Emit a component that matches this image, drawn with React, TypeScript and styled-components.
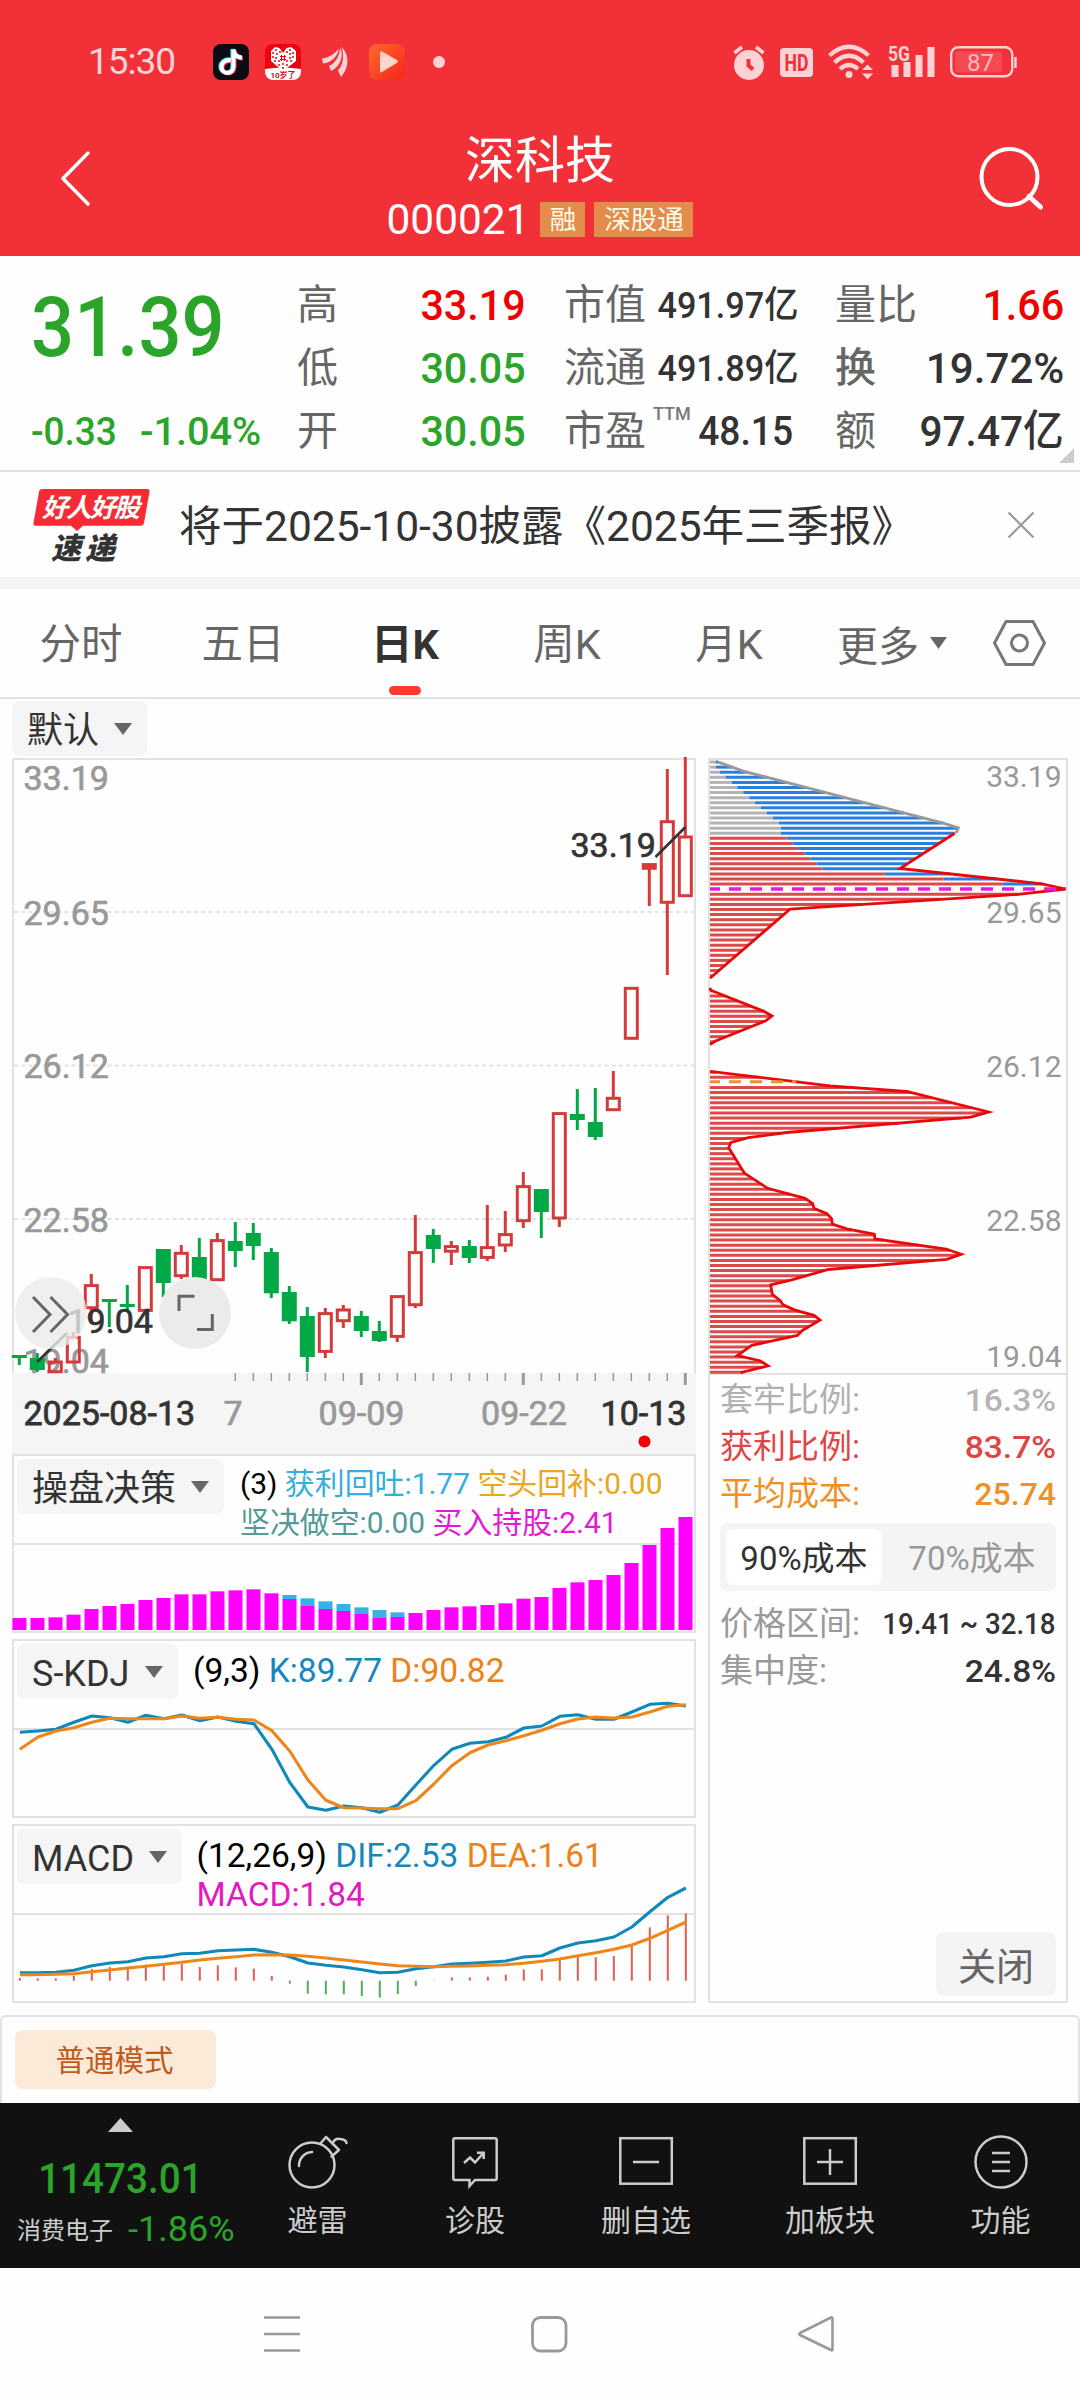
import React from "react";
import styled, { createGlobalStyle } from "styled-components";

const GlobalStyle = createGlobalStyle`
  * { box-sizing: border-box; }
  body { margin: 0; background: #fdfdfd; }
  svg { display: block; flex: none; overflow: visible; }
`;

const FONT = `Roboto, "Noto Sans CJK SC", "Noto Sans", sans-serif`;
const UP = "#f00000";
const DOWN = "#2aa52a";
const LINE = "#e2e2e2";

const Page = styled.div`
  width: 1080px;
  height: 2400px;
  display: flex;
  flex-direction: column;
  overflow: hidden;
  background: #fefefe;
  color: #333;
  font-family: ${FONT};
  white-space: nowrap;
`;

/* ---------- header ---------- */

const Header = styled.header`
  height: 256px;
  flex: none;
  background: #f23038;
  color: #fff;
`;

const StatusBar = styled.div`
  height: 124px;
  padding: 0 63px 0 88px;
  display: flex;
  justify-content: space-between;
  align-items: center;
  color: #ffd3d6;
`;

const StatusGroup = styled.div<{ $gap: number }>`
  display: flex;
  align-items: center;
  gap: ${(p) => p.$gap}px;
`;

const Clock = styled.span`
  width: 109px;
  font-size: 37px;
  line-height: 44px;
  letter-spacing: -1px;
`;

const Dot = styled.span`
  width: 12px;
  height: 12px;
  margin-left: 7px;
  border-radius: 50%;
  background: #ffd3d6;
`;

const TitleBar = styled.div`
  height: 132px;
  display: grid;
  grid-template-columns: 300px 1fr 300px;
`;

const BackSlot = styled.div`
  padding: 26px 0 0 59px;
`;

const SearchSlot = styled.div`
  padding: 21px 34.5px 0 0;
  display: flex;
  justify-content: flex-end;
  align-items: flex-start;
`;

const TitleCenter = styled.div`
  display: flex;
  flex-direction: column;
  align-items: center;
`;

const StockName = styled.div`
  margin-top: 6px;
  font-size: 50px;
  line-height: 62px;
`;

const CodeRow = styled.div`
  margin-top: 5px;
  height: 44px;
  display: flex;
  align-items: center;
  font-size: 42.4px;
`;

const Badge = styled.span<{ $w: number; $ml: number }>`
  width: ${(p) => p.$w}px;
  margin-left: ${(p) => p.$ml}px;
  margin-top: 1px;
  height: 35px;
  background: #e28d4b;
  color: #fffbe8;
  font-size: 26.5px;
  line-height: 36px;
  text-align: center;
`;

/* ---------- quote ---------- */

const Quote = styled.section`
  height: 216px;
  flex: none;
  padding: 18px 0 0 31px;
  border-bottom: 2px solid ${LINE};
  display: flex;
  position: relative;
`;

const PriceCol = styled.div`
  width: 265px;
`;

const Num = styled.span<{
  $size: number;
  $color?: string;
  $sx?: number;
  $weight?: number;
  $from?: "left" | "right" | "center";
}>`
  display: inline-block;
  font-size: ${(p) => p.$size}px;
  color: ${(p) => p.$color ?? "#333"};
  font-weight: ${(p) => p.$weight ?? 500};
  transform: scaleX(${(p) => p.$sx ?? 1});
  transform-origin: ${(p) => p.$from ?? "right"} center;
`;

const LastPrice = styled.div`
  height: 126px;
  padding-top: 5px;
  line-height: 98px;
`;

const ChangeRow = styled.div`
  height: 63px;
  line-height: 63px;
  display: flex;
`;

const ChangeCell = styled.div`
  width: 109px;
`;

const StatCol = styled.div<{ $w: number; $ml: number }>`
  width: ${(p) => p.$w}px;
  margin-left: ${(p) => p.$ml}px;
`;

const StatRow = styled.div`
  height: 63px;
  line-height: 63px;
  display: flex;
  justify-content: space-between;
`;

const StatLabel = styled.span<{ $bold?: boolean }>`
  font-size: 41px;
  color: #666;
  font-weight: ${(p) => (p.$bold ? 500 : 400)};
`;

const Sup = styled.span`
  font-size: 18px;
  line-height: 20px;
  margin: 4px auto 0 7px;
  font-weight: 500;
  color: #777;
`;

const Corner = styled.svg`
  position: absolute;
  right: 6px;
  bottom: 7px;
`;

/* ---------- news strip ---------- */

const News = styled.section`
  height: 117px;
  flex: none;
  padding: 0 45px 0 33px;
  display: flex;
  align-items: center;
  border-bottom: 12px solid #f5f5f5;
`;

const NewsLogoSlot = styled.div`
  padding-top: 3px;
`;

const NewsText = styled.div`
  margin-left: 29px;
  padding-top: 5px;
  flex: 1;
  font-size: 42.5px;
  line-height: 60px;
`;

/* ---------- tabs ---------- */

const Tabs = styled.nav`
  height: 110px;
  flex: none;
  display: flex;
  border-bottom: 2px solid ${LINE};
`;

const Tab = styled.div<{ $active?: boolean }>`
  width: 162px;
  height: 108px;
  display: flex;
  flex-direction: column;
  align-items: center;
  padding-top: 25px;
  font-size: 41.5px;
  line-height: 62px;
  color: ${(p) => (p.$active ? "#333" : "#666")};
  font-weight: ${(p) => (p.$active ? 700 : 400)};
`;

const TabMark = styled.span`
  width: 32px;
  height: 9px;
  margin-top: 10px;
  border-radius: 5px;
  background: #fb3b30;
`;

const MoreTab = styled.div`
  display: flex;
  align-items: center;
  gap: 11px;
  width: 155px;
  margin-left: 27px;
  font-size: 41px;
  color: #666;
`;

/* ---------- chart area ---------- */

const Toolbar = styled.div`
  height: 59px;
  flex: none;
  padding: 2px 12px;
`;

const Dropdown = styled.div<{ $w: number }>`
  width: ${(p) => p.$w}px;
  height: 55px;
  padding: 0 15px 0 15px;
  display: flex;
  align-items: center;
  justify-content: space-between;
  border-radius: 7px;
  background: #f5f5f5;
  font-size: 36px;
  line-height: 53px;
`;

const DropdownText = styled.span`
  padding-top: 5px;
`;

const ChartArea = styled.div`
  height: 1245px;
  flex: none;
  padding: 0 12px;
  display: flex;
  gap: 12px;
`;

const ChartColumn = styled.div`
  width: 684px;
  display: flex;
  flex-direction: column;
`;

const CandleBox = styled.div`
  position: relative;
  height: 615px;
  box-shadow: inset 2px 2px 0 ${LINE}, inset -2px 0 0 ${LINE};
`;

const FloatButton = styled.div<{ $x: number; $bg: string }>`
  position: absolute;
  left: ${(p) => p.$x}px;
  top: 519px;
  width: 72px;
  height: 72px;
  border-radius: 50%;
  background: ${(p) => p.$bg};
`;

const AxisBox = styled.div`
  height: 81px;
  background: #f5f5f5;
`;

const Panel = styled.div`
  height: 179px;
  margin-bottom: 6px;
  display: grid;
  box-shadow: inset 0 0 0 2px ${LINE};
  & > * { grid-area: 1 / 1; }
`;

const PanelHead = styled.div`
  padding: 5px;
  display: flex;
`;

const Params = styled.div<{ $size: number; $ml: number; $top: number }>`
  margin-left: ${(p) => p.$ml}px;
  margin-top: ${(p) => p.$top}px;
  font-size: ${(p) => p.$size}px;
  line-height: 39px;
  color: #000;
`;

const Ink = styled.span<{ $c: string }>`
  color: ${(p) => p.$c};
`;

/* ---------- cost distribution ---------- */

const CostPanel = styled.aside`
  width: 360px;
  display: flex;
  flex-direction: column;
  box-shadow: inset 0 0 0 2px ${LINE};
`;

const CostInfo = styled.div`
  flex: 1;
  padding: 0 12px 7px;
  display: flex;
  flex-direction: column;
`;

const CostRow = styled.div<{ $c: string }>`
  height: 47px;
  display: flex;
  justify-content: space-between;
  font-size: 33px;
  line-height: 50px;
  color: ${(p) => p.$c};
`;

const Segments = styled.div`
  height: 68px;
  margin: 7px 0 8px;
  padding: 6px;
  display: flex;
  border-radius: 8px;
  background: #f4f4f4;
`;

const Segment = styled.div<{ $on?: boolean }>`
  width: ${(p) => (p.$on ? 156 : 168)}px;
  height: 56px;
  padding-left: ${(p) => (p.$on ? 0 : 12)}px;
  border-radius: 8px;
  background: ${(p) => (p.$on ? "#fff" : "transparent")};
  color: ${(p) => (p.$on ? "#333" : "#999")};
  font-size: 33px;
  line-height: 60px;
  text-align: center;
`;

const CloseButton = styled.div`
  width: 120px;
  height: 64px;
  margin: auto 0 0 auto;
  border-radius: 8px;
  background: #f4f4f4;
  color: #666;
  font-size: 38px;
  line-height: 70px;
  text-align: center;
`;

/* ---------- bottom ---------- */

const ModeBar = styled.div`
  height: 88px;
  flex: none;
  margin-top: 12px;
  padding: 13px;
  border: 2px solid ${LINE};
  border-bottom: 0;
  border-radius: 6px 6px 0 0;
`;

const ModeButton = styled.div`
  width: 201px;
  height: 59px;
  padding-right: 2px;
  border-radius: 8px;
  background: #fcead9;
  color: #bf5a1c;
  font-size: 29.5px;
  line-height: 63px;
  text-align: center;
`;

const ActionBar = styled.div`
  height: 165px;
  flex: none;
  background: #111;
  color: #ccc;
  display: flex;
`;

const IndexCell = styled.div`
  width: 240px;
  padding-top: 15px;
  display: flex;
  flex-direction: column;
  align-items: center;
`;

const IndexValue = styled.div`
  height: 50px;
  margin-top: 22px;
  line-height: 50px;
`;

const IndexRow = styled.div`
  width: 240px;
  margin-top: 2px;
  padding-left: 17px;
  display: flex;
  align-items: center;
  font-size: 24px;
  height: 44px;
  gap: 15px;
`;

const IndexChange = styled.div`
  padding-top: 3px;
`;

const Action = styled.div<{ $w: number }>`
  width: ${(p) => p.$w}px;
  padding-top: 32px;
  display: flex;
  flex-direction: column;
  align-items: center;
  font-size: 30px;
  line-height: 40px;
`;

const ActionText = styled.div`
  margin-top: 12px;
`;

const SystemNav = styled.div`
  height: 132px;
  flex: none;
  padding: 46px 244px 0 262px;
  display: flex;
  justify-content: space-between;
`;

/* ---------- icons ---------- */

const Caret = ({ w = 18 }: { w?: number }) => (
  <svg width={w} height="12" viewBox="0 0 18 12" preserveAspectRatio="none">
    <path d="M0 0H18L9 12Z" fill="#666" />
  </svg>
);

const TikTokIcon = () => (
  <svg width="36" height="36" viewBox="0 0 36 36">
    <rect width="36" height="36" rx="8" fill="#0b0b14" />
    <g fill="none" strokeWidth="4.2">
      <path d="M17 15.500C11 15 7.500 18.500 7.500 22.500c0 8 12 8.500 12-.5V5c.5 5 3.500 8 8.500 8.200" stroke="#25e3df" />
      <path d="M19 17C13 16.500 9.500 20 9.500 23.500c0 8 12 8 12-.5V6.500c.5 5 3.500 8 8.500 8.200" stroke="#f2244d" />
      <path d="M18 16.200C12 15.700 8.500 19 8.500 23c0 8 12 8 12-.5V5.500c.5 5 3.500 8 8.500 8.200" stroke="#fff" />
    </g>
  </svg>
);

const HeartIcon = () => (
  <svg width="36" height="36" viewBox="0 0 36 36">
    <rect width="36" height="36" rx="8" fill="#f0000f" />
    <path d="M0 25Q18 22 36 25V28a8 8 0 0 1-8 8H8a8 8 0 0 1-8-8Z" fill="#fff" />
    <path d="M18 27L6 17V7L10 3L14.500 4L18 9L21.500 4L26 3L31 7V17Z" fill="#fff" />
    <g fill="#f0000f">
      {[[8, 9], [11, 6], [12, 10], [15, 8], [8, 13], [11, 14], [10, 17], [14, 17], [14, 21], [22, 8], [25, 6], [25, 10], [28, 9], [28, 13], [25, 14], [26, 17], [22, 17], [22, 21], [18, 20], [18, 24]].map(([x, y]) => (
        <circle key={`${x}-${y}`} cx={x} cy={y} r="1" />
      ))}
    </g>
    <path d="M16.500 11v6M19.500 11v6M15 12.500h6M15 15.500h6" stroke="#f0000f" strokeWidth="1" />
    <text x="18" y="34" fontSize="8" fontWeight="700" textAnchor="middle" fill="#d0101c">10岁了</text>
  </svg>
);

const FeatherIcon = () => (
  <svg width="26" height="30" viewBox="0 0 26 30">
    <g fill="#ffd3d6">
      <path d="M0 11.500C8 10.500 13 6 16.500 2C17 7 10 16 1 16.500Z" />
      <path d="M7 19C14 16 18 8 18 .5C22.500 9 18 20 9 24Z" />
      <path d="M16 23.500C22 17 22 8 19.500 0C28 8 27 21 19 30Z" />
    </g>
  </svg>
);

const PlayIcon = () => (
  <svg width="36" height="36" viewBox="0 0 36 36">
    <defs>
      <linearGradient id="play" x1="0" y1="0" x2="1" y2="1">
        <stop offset="0" stopColor="#ff6a2c" />
        <stop offset="1" stopColor="#f3261c" />
      </linearGradient>
    </defs>
    <rect width="36" height="36" rx="8" fill="url(#play)" />
    <path d="M11 8.500q0-2 2-1L28 16q2 1.500 0 3L13 28q-2 1-2-1Z" fill="#ffc9bb" />
    <path d="M11 15L19 11L28 17.500L11 28Z" fill="#ffdfd6" opacity=".6" />
  </svg>
);

const AlarmIcon = () => (
  <svg width="32" height="35" viewBox="0 0 32 35">
    <circle cx="16" cy="20" r="15" fill="#ffd3d6" />
    <path d="M1.500 8L9 2M30.500 8L23 2" stroke="#ffd3d6" strokeWidth="3.600" />
    <path d="M15.500 14v6.500l4.500 4" stroke="#f23038" strokeWidth="4" fill="none" />
  </svg>
);

const HdIcon = () => (
  <svg width="33" height="29" viewBox="0 0 33 29">
    <rect width="33" height="29" rx="4" fill="#ffd3d6" />
    <text x="16.500" y="22.500" fontSize="23" fontWeight="700" textAnchor="middle" textLength="24" lengthAdjust="spacingAndGlyphs" fill="#f23038">HD</text>
  </svg>
);

const WifiIcon = () => (
  <svg width="45" height="36" viewBox="0 0 45 36">
    <g fill="none" stroke="#ffd3d6" strokeWidth="4.300">
      <path d="M1.500 11.500Q21 -6 40.500 11.500" />
      <path d="M6.500 18.500Q21 5 35.500 18.500" />
      <path d="M12 25Q21 17 30 25" />
    </g>
    <circle cx="21" cy="30.500" r="3.500" fill="#ffd3d6" />
    <path d="M34 26L39.500 20.500L45 26ZM34 29.500L39.500 35.500L45 29.500Z" fill="#ffd3d6" />
  </svg>
);

const SignalIcon = () => (
  <svg width="47" height="36" viewBox="0 0 47 36">
    <text x="0" y="16.500" fontSize="21" fontWeight="700" textLength="22" lengthAdjust="spacingAndGlyphs" fill="#ffd3d6">5G</text>
    <path d="M3.500 21h7v12h-7zM15.500 18h7v15h-7zM27.500 11h7v22h-7zM39.500 3h7v30h-7z" fill="#ffd3d6" />
  </svg>
);

const BatteryIcon = () => (
  <svg width="67" height="32" viewBox="0 0 67 32">
    <rect x="1.200" y="1.200" width="61" height="29" rx="7" fill="none" stroke="#ffd3d6" strokeWidth="2.400" />
    <rect x="5" y="5.500" width="47" height="21" rx="3" fill="#f64a52" />
    <path d="M65.500 11v11" stroke="#ffd3d6" strokeWidth="2.500" />
    <text x="30.500" y="24.500" fontSize="24" textAnchor="middle" fill="#ffb9bd">87</text>
  </svg>
);

const NewsLogo = () => (
  <svg width="117" height="74" viewBox="0 0 117 74">
    <path d="M9 0H114q3 0 2.500 3L111 34q-.5 2.700-3 2.700H50L44 42L38 36.700H2.500Q0 36.700.5 34L6 3Q6.500 0 9 0Z" fill="#f52c36" />
    <text x="9" y="28" fontSize="26" fontWeight="700" fontStyle="italic" textLength="98" fill="#fff">好人好股</text>
    <text x="18" y="70" fontSize="30" fontWeight="900" fontStyle="italic" textLength="64" fill="#333">速递</text>
  </svg>
);

const BombIcon = () => (
  <svg width="60" height="54" viewBox="0 0 60 54">
    <g fill="none" stroke="#ccc" strokeWidth="2.500" strokeLinejoin="round" strokeLinecap="round">
      <circle cx="24" cy="30" r="22.500" />
      <path d="M11 31A13.500 13.500 0 0 1 24 17" />
      <path d="M32 9L38 2L51 15L43.500 21.500" />
      <path d="M44.500 8.500Q47 3 52 4Q58 4.500 58.500 8" />
    </g>
  </svg>
);

const DiagnoseIcon = () => (
  <svg width="46" height="54" viewBox="0 0 46 54">
    <g fill="none" stroke="#ccc" strokeWidth="2.500">
      <path d="M3 3.200H43q1.700 0 1.700 1.700V43q0 2-1.700 2H23L17.500 51V45H3Q1.300 45 1.300 43V5q0-1.800 1.700-1.800Z" />
      <path d="M12 28L18 22.500L23 27.500L31 18.500M25 17.700H31.700V24" />
    </g>
  </svg>
);

const BoxIcon = ({ plus }: { plus?: boolean }) => (
  <svg width="54" height="54" viewBox="0 0 54 54">
    <g fill="none" stroke="#ccc" strokeWidth="2.500">
      <rect x="1.300" y="3.200" width="51.500" height="45.500" />
      <path d={plus ? "M14 27H40M27 14V40" : "M14 27H40"} />
    </g>
  </svg>
);

const MenuIcon = () => (
  <svg width="54" height="54" viewBox="0 0 54 54">
    <g fill="none" stroke="#ccc" strokeWidth="2.500">
      <circle cx="27" cy="27" r="25.500" />
      <path d="M18 18H36M18 27H36M18 36H36" />
    </g>
  </svg>
);

/* ---------- chart data ---------- */

const slotX = (i: number) => 19.3 + 18 * i;

// [rising, body top, body bottom, high, low]
const candles: [number, number, number, number, number][] = [
  [0, 1355, 1358, 1355, 1365], [0, 1358, 1370, 1353, 1372], [1, 1360.7, 1373, 1358, 1373],
  [1, 1336, 1363.3, 1332, 1363], [1, 1284.3, 1309, 1274, 1324], [0, 1299, 1302, 1299, 1327],
  [0, 1304, 1307, 1285, 1310], [1, 1266.3, 1311.7, 1267, 1311], [0, 1249, 1283, 1249, 1297],
  [1, 1252, 1277, 1245, 1279], [0, 1257, 1280, 1238, 1280], [1, 1239.3, 1281, 1233, 1281],
  [0, 1241, 1251, 1222, 1267], [0, 1233, 1246, 1223, 1260], [0, 1252, 1293.3, 1248, 1298],
  [0, 1292, 1321.3, 1286, 1324], [0, 1316, 1357, 1307, 1372], [1, 1312.3, 1352.7, 1308, 1358],
  [1, 1308.7, 1322, 1305, 1328], [0, 1316, 1331, 1311, 1337], [0, 1331, 1341, 1321, 1342],
  [1, 1295.3, 1337.7, 1296, 1342], [1, 1251.3, 1306, 1215, 1308], [0, 1235, 1249, 1229, 1263],
  [1, 1245.3, 1252.5, 1241, 1265], [0, 1246, 1258, 1240, 1263], [1, 1246.3, 1258.7, 1205, 1261],
  [1, 1233.3, 1246.3, 1211, 1252], [1, 1185.3, 1222, 1172, 1228], [0, 1189, 1212, 1189, 1238],
  [1, 1112.3, 1219.3, 1113, 1227], [0, 1114, 1120, 1089, 1130], [0, 1122, 1137, 1088, 1140],
  [1, 1097, 1111, 1071, 1111], [1, 987, 1039.6, 988, 1039], [1, 863.3, 869.6, 864, 906],
  [1, 820.4, 903.6, 769, 975], [1, 835.7, 897, 757, 897],
];

const axisPrices: [string, number][] = [["33.19", 790], ["29.65", 925], ["26.12", 1078], ["22.58", 1231.500], ["19.04", 1373]];

// bar tops: [magenta, cyan cap]
const tradeTops: [number, number?][] = [
  [504], [504], [502], [494], [477], [468], [462], [450], [444], [433], [433], [424], [421], [418], [430],
  [447, 435], [468, 445], [477, 454], [483, 462], [492, 472], [504, 480], [501, 487], [489], [480], [472],
  [469], [465], [460], [446], [441], [414], [397], [390], [375], [339], [285], [234], [201],
];

const kLine = [
  847, 843, 838, 817, 798, 803, 817, 796, 806, 795, 812, 801, 814, 821, 898, 998, 1071, 1081, 1068, 1073, 1087,
  1065, 1005, 946, 898, 880, 875, 862, 834, 828, 799, 794, 808, 808, 786, 763, 760, 768,
];
const dLine = [
  898, 861, 843, 833, 817, 805, 806, 806, 806, 798, 805, 802, 808, 810, 842, 904, 990, 1051, 1073, 1074, 1076,
  1076, 1052, 1002, 947, 908, 885, 872, 857, 841, 821, 807, 801, 804, 801, 786, 769, 764,
];
const difLine = [
  698, 698, 697, 691, 677, 669, 665, 654, 650, 641, 640, 632, 630, 628, 637, 650, 669, 676, 681, 689, 698, 697,
  686, 680, 672, 670, 667, 663, 651, 647, 624, 609, 602, 591, 561, 515, 472, 444,
];
const deaLine = [
  704, 704, 703, 701, 695, 690, 684, 679, 673, 667, 660, 655, 650, 645, 644, 645, 649, 654, 660, 666, 672, 677,
  679, 680, 679, 678, 676, 674, 670, 664, 657, 647, 638, 628, 615, 595, 571, 546,
];
const histogram = [
  714, 715, 715, 707, 687, 681, 682, 674, 676, 672, 681, 676, 682, 686, 708, 731, 761, 763, 763, 768, 773, 762,
  738, 721, 712, 712, 710, 704, 688, 688, 656, 650, 652, 648, 613, 562, 526, 520,
];

const polyline = (values: number[], base: number) =>
  values.map((v, i) => `${(slotX(i) + 0.6).toFixed(1)},${(base + v / 3).toFixed(1)}`).join(" ");

type Pt = [number, number];
const trapped: Pt[] = [[55, 30], [132, 53], [730, 182], [775, 194], [768, 207]];
const peak: Pt[] = [[764, 207], [600, 295], [1025, 333], [1097, 346], [960, 359], [270, 396], [30, 568]];
const bump: Pt[] = [[30, 592], [32, 598], [190, 650], [216, 662], [197, 674], [45, 725], [30, 733]];
const base: Pt[] = [
  [30, 800], [390, 836], [620, 850], [866, 901], [812, 914], [260, 952], [145, 965], [93, 977], [86, 990],
  [133, 1053], [203, 1091], [315, 1116], [338, 1129], [342, 1141], [381, 1154], [395, 1167], [397, 1180],
  [440, 1192], [523, 1205], [525, 1217], [738, 1242], [784, 1255], [740, 1268], [385, 1293], [275, 1319],
  [212, 1331], [217, 1355], [240, 1370], [249, 1381], [285, 1394], [342, 1407], [360, 1419], [308, 1444],
  [292, 1457], [155, 1482], [112, 1507], [180, 1520], [204, 1533], [122, 1550],
];
const innerEdge = [
  48, 48, 59, 77, 95, 112, 130, 148, 165, 183, 201, 219, 237, 243, 243, 260, 278, 295, 313, 331, 349, 367, 554,
  731, 908,
];

const costX = (v: number) => 700 + v / 3;
const costY = (v: number) => 750 + v / 2.489;
const trace = (pts: Pt[]) => pts.map(([x, y]) => `${costX(x).toFixed(1)},${costY(y).toFixed(1)}`).join(" ");

const edgeAt = (y: number) => {
  for (const line of [trapped, peak, bump, base]) {
    for (let i = 1; i < line.length; i++) {
      const [x0, y0] = line[i - 1];
      const [x1, y1] = line[i];
      if (y >= y0 && y <= y1) return x0 + ((x1 - x0) * (y - y0)) / (y1 - y0 || 1);
    }
  }
  return 30;
};

const costRows = Array.from({ length: 121 }, (_, i) => {
  const y = 30 + 12.658 * i;
  return { i, y: costY(y), end: costX(edgeAt(y)), inner: innerEdge[i] === undefined ? null : costX(innerEdge[i]) };
}).filter((r) => r.end > 710.5 && r.i !== 25 && r.i !== 63);

/* ---------- charts ---------- */

const CandleChart = () => (
  <svg width="684" height="615" viewBox="12 758 684 615">
    {[912, 1065.500, 1219].map((y) => (
      <path key={y} d={`M14 ${y}H694`} stroke="#e2e2e2" strokeWidth="2" strokeDasharray="4 3.200" />
    ))}
    <g fontSize="34" fill="#999" stroke="#999" strokeWidth=".7">
      {axisPrices.map(([t, y]) => (
        <text key={t} x="23.500" y={y}>{t}</text>
      ))}
    </g>
    {candles.map(([up, top, bottom, high, low], i) => {
      const x = slotX(i);
      const color = up ? "#d43a3a" : "#00a846";
      return (
        <g key={i}>
          {high < top && <path d={`M${x} ${high}V${top + 1}`} stroke={color} strokeWidth="3" />}
          {low > bottom && <path d={`M${x} ${bottom - 1}V${low}`} stroke={color} strokeWidth="3" />}
          {up ? (
            <rect x={x - 6} y={top + 1.300} width="12" height={bottom - top - 2.600} fill={i === 35 ? color : "none"} stroke={color} strokeWidth="3" />
          ) : (
            <rect x={x - 7.500} y={top} width="15" height={bottom - top} fill={color} />
          )}
        </g>
      );
    })}
    <g stroke="#333" strokeWidth="2.600">
      <path d="M655.500 857L685.500 827M37 1362L67 1333" />
    </g>
    <g fontSize="34" fill="#333" stroke="#333" strokeWidth=".7">
      <text x="570.500" y="857">33.19</text>
      <text x="67.500" y="1332.500">19.04</text>
    </g>
  </svg>
);

const DateAxis = () => (
  <svg width="684" height="81" viewBox="12 1373 684 81">
    {candles.map((_, i) =>
      i < 12 ? null : (
        <path key={i} d={`M${slotX(i)} 1373V${i % 9 === 1 ? 1385 : 1381}`} stroke="#999" strokeWidth={i % 9 === 1 ? 3 : 1.500} />
      ),
    )}
    <g fontSize="34" fill="#999" stroke="#999" strokeWidth=".7">
      <text x="223.500" y="1425">7</text>
      <text x="361.500" y="1425" textAnchor="middle">09-09</text>
      <text x="524" y="1425" textAnchor="middle">09-22</text>
    </g>
    <g fontSize="34" fill="#333" stroke="#333" strokeWidth=".8">
      <text x="23.500" y="1425">2025-08-13</text>
      <text x="643.500" y="1425" textAnchor="middle">10-13</text>
    </g>
    <circle cx="644.500" cy="1441.500" r="6" fill="#f00000" />
  </svg>
);

const TradeChart = () => (
  <svg width="684" height="179" viewBox="12 1454 684 179">
    <path d="M14 1544H694" stroke={LINE} strokeWidth="2" />
    {tradeTops.map(([m, c], i) => {
      const top = 1450 + m / 3;
      return (
        <g key={i}>
          {c !== undefined && <rect x={slotX(i) - 6.800} y={1450 + c / 3} width="14" height={(m - c) / 3} fill="#36b3e4" />}
          <rect x={slotX(i) - 6.800} y={top} width="14" height={1630 - top} fill="#ff00ff" />
        </g>
      );
    })}
  </svg>
);

const KdjChart = () => (
  <svg width="684" height="179" viewBox="12 1639 684 179">
    <path d="M14 1729H694" stroke={LINE} strokeWidth="2" />
    <g fill="none" strokeWidth="3.100" strokeLinejoin="round">
      <polyline points={polyline(kLine, 1450)} stroke="#1088ba" />
      <polyline points={polyline(dLine, 1450)} stroke="#ee861a" />
    </g>
  </svg>
);

const MacdChart = () => (
  <svg width="684" height="179" viewBox="12 1824 684 179">
    <path d="M14 1914H694" stroke={LINE} strokeWidth="2" />
    {histogram.map((v, i) => (
      <path key={i} d={`M${slotX(i) + 0.500} 1980.700V${1740 + v / 3}`} stroke={v > 722 ? "#4fae5d" : "#e05f50"} strokeWidth="2" />
    ))}
    <g fill="none" strokeWidth="3.100" strokeLinejoin="round">
      <polyline points={polyline(difLine, 1740)} stroke="#1088ba" />
      <polyline points={polyline(deaLine, 1740)} stroke="#ee861a" />
    </g>
  </svg>
);

const CostChart = () => (
  <svg width="360" height="617" viewBox="708 758 360 617">
    <path d="M708 1374H1068" stroke={LINE} strokeWidth="2" />
    <g strokeWidth="3">
      {costRows.map(({ i, y, end, inner }) => (
        <g key={i}>
          <path d={`M710 ${y}H${inner ?? end}`} stroke={i < 15 ? "#b3b3b3" : "#dc4a4a"} />
          {inner !== null && <path d={`M${inner} ${y}H${end}`} stroke="#2b7fdc" />}
        </g>
      ))}
    </g>
    <g fill="none" strokeWidth="2.800">
      <polyline points={trace(trapped)} stroke="#999" />
      <g stroke="#e80a0a">
        <polyline points={trace(peak)} />
        <polyline points={trace(bump)} />
        <polyline points={trace(base)} />
      </g>
    </g>
    <path d="M710 889H1066" stroke="#e31be0" strokeWidth="3.500" strokeDasharray="12 9" strokeDashoffset="2" />
    <path d="M710 1081.800H796" stroke="#e6952e" strokeWidth="3" strokeDasharray="12 9" strokeDashoffset="2" />
    <g fontSize="30" fill="#999" textAnchor="end">
      <text x="1061.500" y="787">33.19</text>
      <text x="1061.500" y="923">29.65</text>
      <text x="1061.500" y="1077">26.12</text>
      <text x="1061.500" y="1231">22.58</text>
      <text x="1061.500" y="1367">19.04</text>
    </g>
  </svg>
);

/* ---------- page ---------- */

export default function App() {
  return (
    <>
      <GlobalStyle />
      <Page>
        <Header>
          <StatusBar>
            <StatusGroup $gap={21}>
              <StatusGroup $gap={16}>
                <Clock>15:30</Clock>
                <TikTokIcon />
                <HeartIcon />
              </StatusGroup>
              <FeatherIcon />
              <PlayIcon />
              <Dot />
            </StatusGroup>
            <StatusGroup $gap={15}>
              <AlarmIcon />
              <HdIcon />
              <WifiIcon />
              <SignalIcon />
              <BatteryIcon />
            </StatusGroup>
          </StatusBar>
          <TitleBar>
            <BackSlot>
              <svg width="32" height="56" viewBox="0 0 32 56">
                <path d="M29 3L4 28.500L29 54" fill="none" stroke="#fff" strokeWidth="3.500" strokeLinecap="round" strokeLinejoin="round" />
              </svg>
            </BackSlot>
            <TitleCenter>
              <StockName>深科技</StockName>
              <CodeRow>
                000021
                <Badge $w={45} $ml={11}>融</Badge>
                <Badge $w={99} $ml={9}>深股通</Badge>
              </CodeRow>
            </TitleCenter>
            <SearchSlot>
              <svg width="68" height="68" viewBox="0 0 68 68">
                <g fill="none" stroke="#fff" strokeWidth="4">
                  <circle cx="31.500" cy="32" r="28" />
                  <path d="M51 51.500L62.500 62" strokeWidth="5" strokeLinecap="round" />
                </g>
              </svg>
            </SearchSlot>
          </TitleBar>
        </Header>

        <Quote>
          <PriceCol>
            <LastPrice><Num $size={83} $color={DOWN} $sx={0.915} $from="left">31.39</Num></LastPrice>
            <ChangeRow>
              <ChangeCell><Num $size={38.5} $color={DOWN} $sx={0.96} $from="left">-0.33</Num></ChangeCell>
              <Num $size={38.5} $color={DOWN} $sx={1.03} $from="left">-1.04%</Num>
            </ChangeRow>
          </PriceCol>
          <StatCol $w={229} $ml={1}>
            <StatRow><StatLabel>高</StatLabel><Num $size={43} $color={UP} $sx={0.96}>33.19</Num></StatRow>
            <StatRow><StatLabel>低</StatLabel><Num $size={43} $color={DOWN} $sx={0.96}>30.05</Num></StatRow>
            <StatRow><StatLabel>开</StatLabel><Num $size={43} $color={DOWN} $sx={0.96}>30.05</Num></StatRow>
          </StatCol>
          <StatCol $w={229} $ml={38}>
            <StatRow><StatLabel>市值</StatLabel><Num $size={37} $sx={0.925}>491.97亿</Num></StatRow>
            <StatRow><StatLabel>流通</StatLabel><Num $size={37} $sx={0.925}>491.89亿</Num></StatRow>
            <StatRow><StatLabel>市盈</StatLabel><Sup>TTM</Sup><Num $size={40} $sx={0.93}>48.15</Num></StatRow>
          </StatCol>
          <StatCol $w={229} $ml={42}>
            <StatRow><StatLabel>量比</StatLabel><Num $size={43} $color={UP} $sx={0.96}>1.66</Num></StatRow>
            <StatRow><StatLabel $bold>换</StatLabel><Num $size={43} $sx={0.98}>19.72%</Num></StatRow>
            <StatRow><StatLabel>额</StatLabel><Num $size={43} $sx={0.945}>97.47亿</Num></StatRow>
          </StatCol>
          <Corner width="15" height="15" viewBox="0 0 15 15"><path d="M15 0V15H0Z" fill="#ccc" /></Corner>
        </Quote>

        <News>
          <NewsLogoSlot><NewsLogo /></NewsLogoSlot>
          <NewsText>将于2025-10-30披露《2025年三季报》</NewsText>
          <svg width="28" height="28" viewBox="0 0 28 28"><path d="M1.500 1.500L26.500 26.500M26.500 1.500L1.500 26.500" stroke="#999" strokeWidth="2.200" /></svg>
        </News>

        <Tabs>
          <Tab>分时</Tab>
          <Tab>五日</Tab>
          <Tab $active>日K<TabMark /></Tab>
          <Tab>周K</Tab>
          <Tab>月K</Tab>
          <MoreTab>更多<Caret w={17} /></MoreTab>
          <svg width="54" height="108" viewBox="0 0 54 108">
            <g fill="none" stroke="#777" strokeWidth="3" strokeLinejoin="round">
              <path d="M14 32.500H41L52.500 54L41 75.500H14L2.500 54Z" />
              <circle cx="27.500" cy="54" r="8" />
            </g>
          </svg>
        </Tabs>

        <Toolbar>
          <Dropdown $w={135}><DropdownText>默认</DropdownText><Caret /></Dropdown>
        </Toolbar>

        <ChartArea>
          <ChartColumn>
            <CandleBox>
              <CandleChart />
              <FloatButton $x={3} $bg="rgba(235, 235, 233, 0.8)">
                <svg width="72" height="72" viewBox="0 0 72 72">
                  <path d="M18 20L35 37.500L18 55M35.500 20L52.500 37.500L35.500 55" fill="none" stroke="#666" strokeWidth="3" />
                </svg>
              </FloatButton>
              <FloatButton $x={147} $bg="#ebebeb">
                <svg width="72" height="72" viewBox="0 0 72 72">
                  <path d="M20 34V19.200H35.500M53.300 37V52.500H38" fill="none" stroke="#666" strokeWidth="3" />
                </svg>
              </FloatButton>
            </CandleBox>
            <AxisBox><DateAxis /></AxisBox>
            <Panel>
              <TradeChart />
              <PanelHead>
                <Dropdown $w={207}><DropdownText>操盘决策</DropdownText><Caret /></Dropdown>
                <Params $size={29.9} $ml={16} $top={5}>
                  (3) <Ink $c="#35addd">获利回吐:1.77</Ink> <Ink $c="#eaa61c">空头回补:0.00</Ink>
                  <br />
                  <Ink $c="#529b99">坚决做空:0.00</Ink> <Ink $c="#e31ad2">买入持股:2.41</Ink>
                </Params>
              </PanelHead>
            </Panel>
            <Panel>
              <KdjChart />
              <PanelHead>
                <Dropdown $w={161}><DropdownText>S-KDJ</DropdownText><Caret /></Dropdown>
                <Params $size={33.5} $ml={15} $top={7}>
                  (9,3) <Ink $c="#1687bd">K:89.77</Ink> <Ink $c="#ee8018">D:90.82</Ink>
                </Params>
              </PanelHead>
            </Panel>
            <Panel>
              <MacdChart />
              <PanelHead>
                <Dropdown $w={165}><DropdownText>MACD</DropdownText><Caret /></Dropdown>
                <Params $size={33.5} $ml={14.5} $top={7}>
                  (12,26,9) <Ink $c="#1687bd">DIF:2.53</Ink> <Ink $c="#ee8018">DEA:1.61</Ink>
                  <br />
                  <Ink $c="#e31abf">MACD:1.84</Ink>
                </Params>
              </PanelHead>
            </Panel>
          </ChartColumn>

          <CostPanel>
            <CostChart />
            <CostInfo>
              <CostRow $c="#b0b0b0">套牢比例:<Num $size={32} $color="#b5b5b5" $sx={1.05}>16.3%</Num></CostRow>
              <CostRow $c="#de4545">获利比例:<Num $size={32} $color="#de4545" $sx={1.05}>83.7%</Num></CostRow>
              <CostRow $c="#ee9128">平均成本:<Num $size={32} $color="#ee9128">25.74</Num></CostRow>
              <Segments>
                <Segment $on>90%成本</Segment>
                <Segment>70%成本</Segment>
              </Segments>
              <CostRow $c="#999">价格区间:<Num $size={29} $sx={0.955}>19.41 ~ 32.18</Num></CostRow>
              <CostRow $c="#999">集中度:<Num $size={32} $sx={1.05}>24.8%</Num></CostRow>
              <CloseButton>关闭</CloseButton>
            </CostInfo>
          </CostPanel>
        </ChartArea>

        <ModeBar>
          <ModeButton>普通模式</ModeButton>
        </ModeBar>

        <ActionBar>
          <IndexCell>
            <svg width="25" height="14" viewBox="0 0 25 14"><path d="M12.500 0L25 14H0Z" fill="#ccc" /></svg>
            <IndexValue><Num $size={42} $color={DOWN} $sx={0.92} $from="center">11473.01</Num></IndexValue>
            <IndexRow>
              消费电子
              <IndexChange><Num $size={35} $color={DOWN} $sx={1.03} $weight={400} $from="left">-1.86%</Num></IndexChange>
            </IndexRow>
          </IndexCell>
          <Action $w={155}><BombIcon /><ActionText>避雷</ActionText></Action>
          <Action $w={160}><DiagnoseIcon /><ActionText>诊股</ActionText></Action>
          <Action $w={182}><BoxIcon /><ActionText>删自选</ActionText></Action>
          <Action $w={186}><BoxIcon plus /><ActionText>加板块</ActionText></Action>
          <Action $w={155}><MenuIcon /><ActionText>功能</ActionText></Action>
        </ActionBar>

        <SystemNav>
          <svg width="40" height="40" viewBox="0 0 40 40"><path d="M2 3.500H38M2 20H38M2 36.500H38" stroke="#999" strokeWidth="2.600" /></svg>
          <svg width="40" height="40" viewBox="0 0 40 40"><rect x="3.500" y="3.500" width="33.500" height="33.500" rx="8" fill="none" stroke="#999" strokeWidth="2.800" /></svg>
          <svg width="40" height="40" viewBox="0 0 40 40"><path d="M35 3.500Q36.500 3 36.500 5V35Q36.500 37 35 36L4 21Q2.500 20 4 19Z" fill="none" stroke="#999" strokeWidth="2.600" /></svg>
        </SystemNav>
      </Page>
    </>
  );
}
